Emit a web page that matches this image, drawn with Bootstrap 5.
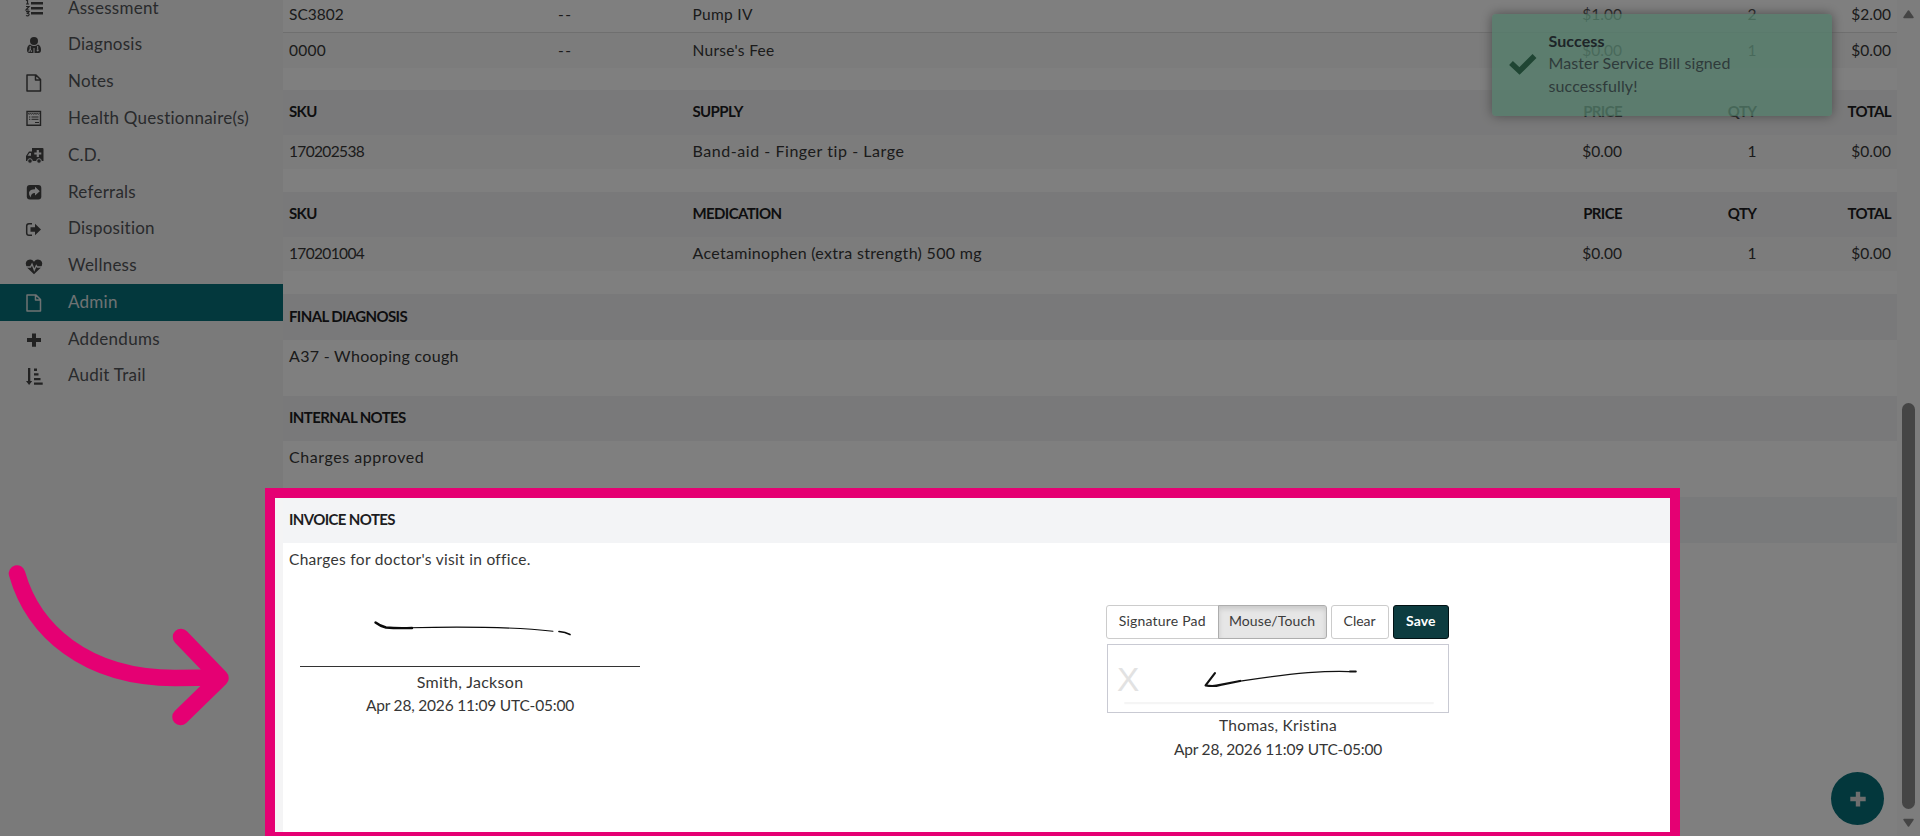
<!DOCTYPE html>
<html lang="en">
<head>
<meta charset="utf-8">
<title>Master Service Bill</title>
<link href="https://cdn.jsdelivr.net/npm/bootstrap@5.3.0/dist/css/bootstrap.min.css" rel="stylesheet">
<style>
body{font-family:Lato,"Liberation Sans",sans-serif;font-size:15.5px;line-height:23px;color:#363636;background:#fff;height:836px;overflow:hidden}
.side{width:283px;background:#f4f4f5;flex:none}
.side .nav{margin-top:-10.2px}
.side .nav-link{height:36.77px;padding:0 0 2px 24px;color:#525558;font-size:17px;letter-spacing:.25px;flex-wrap:nowrap}
.side .nav-link.active{background:#06707b;color:#dfe5e6}
.side .nav-link svg{width:20px;height:20px;margin-right:24px;position:relative;top:2px;color:#444}
.side .nav-link.active svg{color:#dfe5e6}
.bill{width:1614px;flex:none}
.line{margin:0;height:33.9px;padding-top:5px;background:#f8f8f8}
.line>*{padding:0 6px}
.line.first{height:32.5px;padding-top:3px;background:#fff;border-bottom:1px solid #dedede}
.line.second{height:35px;padding-top:6px}
.line.head{height:45.3px;padding-top:10.3px;background:#f3f3f4;color:#1d1d22;font-weight:700;letter-spacing:-.62px;font-size:15px}
.line.head.lit{background:#f3f4f6}
.gap-above{margin-top:23px}
.second + .gap-above{margin-top:22.4px}
.wide{letter-spacing:.3px;font-size:16px}
.wider{letter-spacing:.55px;font-size:16px}
.line>.wide,.line>.wider{margin-top:-1px}
.semi{letter-spacing:.3px}
.tight{letter-spacing:-.65px}
.stamp{letter-spacing:-.2px}
.dashes{letter-spacing:1.6px}
.note{height:56.2px;padding:5px 6px 0}
.note.wide,.note.wider{padding-top:4px}
.sign{width:342px;margin-left:17px}
.sign-line{width:340px;height:69px;border-bottom:1px solid #333}
.sign-line svg{margin-top:-.5px}
.ctl{padding-top:6px;gap:4px;margin:0 0 5px -1px;width:343px}
.btn{--bs-btn-font-size:14px;--bs-btn-padding-y:0;--bs-btn-padding-x:0;--bs-btn-border-radius:3px;height:34px;color:#3b3b3b;border-color:#ccc;white-space:nowrap;--bs-btn-line-height:28px;padding-bottom:2px;width:58.5px}
.btn.src{width:112.5px;letter-spacing:.2px}
.btn.on{width:109px;letter-spacing:.1px;background:#e6e6e6;border-color:#adadad;box-shadow:inset 0 3px 5px rgba(0,0,0,.125)}
.btn.save{width:56.500px;background:#0d3c40;border-color:#021114;color:#fff;font-weight:700;letter-spacing:.1px}
.pad{height:69px;width:342px;border:1px solid #c9cad3}
.rail{width:23px;background:#fafafa;flex:none;padding-left:5px}
.rail .thumb{width:13px;height:406px;border-radius:7px;background:#8a8a8a}
.notice{left:1491.5px;top:14px;width:340.5px;height:102px;border-radius:4px;background:rgba(169,250,214,.8);box-shadow:0 0 12px #999;color:#5f7777;font-size:16px;line-height:22.6px;padding:13px 16px 15.5px;letter-spacing:.1px}
.notice strong{color:#3c4a50}
.fab{left:1831px;top:772px;width:53px;height:53px;background:#066f79;color:#dcdcdc}
.spot{left:265px;top:487.6px;width:1414.7px;height:354.3px;border:10px solid #e50073;box-shadow:0 0 0 2000px rgba(0,0,0,.5)}
.arrow{left:0;top:560px}
</style>
</head>
<body class="d-flex position-relative">
<svg width="0" height="0" class="position-absolute">
<symbol id="file" viewBox="0 0 20 20"><path d="M3 2h9l4.500 4.500V18H3zM11.500 2v5h5" fill="none" stroke="currentColor" stroke-width="1.500" stroke-linejoin="round"/></symbol>
<symbol id="plus" viewBox="0 0 20 20"><path d="M8 3.500h4V8h5v4h-5v4.800H8V12H3V8h5z" fill="currentColor"/></symbol>
</svg>
<aside class="side">
<nav class="nav flex-column">
<a class="nav-link d-flex align-items-center"><svg viewBox="0 0 20 20" fill="currentColor"><path d="M7 3h12v2.400H7zM7 8h12v2.400H7zM7 13h12v2.400H7z"/><path d="M2 1.500 3.500.500V5M2 5h3M2 7.500h3L2 11h3.200M2 12.700h3L3.500 14.500Q5.500 14.500 5 16 4 17.500 2 16.500" fill="none" stroke="currentColor" stroke-width="1.200"/></svg>Assessment</a>
<a class="nav-link d-flex align-items-center"><svg viewBox="0 0 20 20" fill="currentColor"><circle cx="10" cy="5" r="4"/><path d="M6 8.500q4 3 8 0 3 1 3 5.500 0 3-2.500 3h-9Q3 17 3 14 3 9.500 6 8.500z"/><path d="M6.200 10v4M5 16q0-2.500 1.200-2.500T7.400 16M10 12v5M13.700 10v3" stroke="#f4f5f6" stroke-width="1" fill="none"/><circle cx="13.700" cy="14.300" r="1.100" fill="#f4f5f6"/></svg>Diagnosis</a>
<a class="nav-link d-flex align-items-center"><svg><use href="#file"/></svg>Notes</a>
<a class="nav-link d-flex align-items-center"><svg viewBox="0 0 20 20" fill="none" stroke="currentColor"><path d="M3 2.500h13.500v13.700H3z" stroke-width="1.400"/><path d="M4 4.500q1.200 1.300 2.300 0 1.200 1.300 2.300 0 1.200 1.300 2.300 0 1.200 1.300 2.300 0 1.200 1.300 2.300 0M5 8h1.300M7.500 8H14.500M5 10.300h1.300M7.500 10.300h7M11 13.500h4"/></svg>Health Questionnaire(s)</a>
<a class="nav-link d-flex align-items-center"><svg viewBox="0 0 20 20" fill="currentColor"><path d="M8 2h10.500q1 0 1 1v12H2v-5l3-4.500h3z"/><circle cx="6" cy="15" r="2.300" stroke="#f4f5f6"/><circle cx="15" cy="15" r="2.300" stroke="#f4f5f6"/><path d="M12.700 4h2.200v2.400h2.400v2.200h-2.400V11h-2.200V8.600h-2.400V6.400h2.400zM3.500 9.800 5.500 7H7v2.800z" fill="#f4f5f6"/></svg>C.D.</a>
<a class="nav-link d-flex align-items-center"><svg viewBox="0 0 20 20"><rect x="2.800" y="2" width="14.500" height="14.500" rx="3" fill="currentColor"/><path d="M11 3.800 15.800 8.300 11 12.500V10q-4.500 0-4 4.500Q4.500 12 5 9.500 6 6.300 11 6.300z" fill="#f4f5f6"/></svg>Referrals</a>
<a class="nav-link d-flex align-items-center"><svg viewBox="0 0 20 20" fill="currentColor"><path d="M8 3.700H5Q2.700 3.700 2.700 6v7Q2.700 15.300 5 15.300H8" fill="none" stroke="currentColor" stroke-width="1.500"/><path d="M6.500 7.300H11V3.800L17 9.500 11 15.200V11.700H6.500z"/></svg>Disposition</a>
<a class="nav-link d-flex align-items-center"><svg viewBox="0 0 20 20"><path d="M10 17.200 3.500 11Q0 6 3.500 3.200 7.500 1 10 4.700 12.500 1 16.500 3.200 20 6 16.500 11z" fill="currentColor"/><path d="M1.500 10H6.500L8 7l2.300 6 2-4.500 1 1.500H18.500" fill="none" stroke="#f4f5f6" stroke-width="1.300"/></svg>Wellness</a>
<a class="nav-link active d-flex align-items-center"><svg><use href="#file"/></svg>Admin</a>
<a class="nav-link d-flex align-items-center"><svg><use href="#plus"/></svg><span class="semi">Addendums</span></a>
<a class="nav-link d-flex align-items-center"><svg viewBox="0 0 20 20" fill="currentColor"><path d="M4 1h2.300v13H8.200L5.100 18 2 14h2zM10 1.500h3V4h-3zM10 6.300h4.500v2.200H10zM10 11h6.500v2.200H10zM10 15.500h8.700v2.300H10z"/></svg>Audit Trail</a>
</nav>
</aside>
<main class="bill">
<div class="row line first"><div class="col-2">SC3802</div><div class="col-1 dashes">--</div><div class="col-6 semi">Pump IV</div><div class="col-1 text-end">$1.00</div><div class="col-1 text-end">2</div><div class="col-1 text-end">$2.00</div></div>
<div class="row line second"><div class="col-2 semi">0000</div><div class="col-1 dashes">--</div><div class="col-6 semi">Nurse's Fee</div><div class="col-1 text-end">$0.00</div><div class="col-1 text-end">1</div><div class="col-1 text-end">$0.00</div></div>
<div class="row line head gap-above"><div class="col-3">SKU</div><div class="col-6">SUPPLY</div><div class="col-1 text-end">PRICE</div><div class="col-1 text-end">QTY</div><div class="col-1 text-end">TOTAL</div></div>
<div class="row line"><div class="col-3 tight">170202538</div><div class="col-6 wider">Band-aid - Finger tip - Large</div><div class="col-1 text-end">$0.00</div><div class="col-1 text-end">1</div><div class="col-1 text-end">$0.00</div></div>
<div class="row line head gap-above"><div class="col-3">SKU</div><div class="col-6">MEDICATION</div><div class="col-1 text-end">PRICE</div><div class="col-1 text-end">QTY</div><div class="col-1 text-end">TOTAL</div></div>
<div class="row line"><div class="col-3 tight">170201004</div><div class="col-6 wide">Acetaminophen (extra strength) 500 mg</div><div class="col-1 text-end">$0.00</div><div class="col-1 text-end">1</div><div class="col-1 text-end">$0.00</div></div>
<div class="row line head gap-above"><div class="col-12">FINAL DIAGNOSIS</div></div>
<div class="note wide">A37 - Whooping cough</div>
<div class="row line head"><div class="col-12">INTERNAL NOTES</div></div>
<div class="note wider">Charges approved</div>
<div class="row line head lit"><div class="col-12">INVOICE NOTES</div></div>
<div class="note semi">Charges for doctor's visit in office.</div>
<div class="row g-0">
<div class="col-6"><div class="sign">
<div class="sign-line"><svg class="d-block" width="340" height="60" viewBox="300 598 340 60" fill="none" stroke="#0a0a0a" stroke-linecap="round"><path d="M375.500 622.500Q380 626 386 627.500 396 628.500 412 628" stroke-width="2.400"/><path d="M410 627.700Q500 625.500 553 631.300" stroke-width="1.100"/><path d="M559 631.500l6 1 5 2" stroke-width="1.700"/></svg></div>
<div class="text-center" style="width:340px"><div class="wide" style="padding-top:3px;padding-bottom:1px">Smith, Jackson</div><div class="stamp">Apr 28, 2026 11:09 UTC-05:00</div></div>
</div></div>
<div class="col-6"><div class="sign text-center">
<div class="d-flex ctl"><div class="btn-group"><button class="btn src">Signature Pad</button><button class="btn on">Mouse/Touch</button></div><button class="btn">Clear</button><button class="btn save">Save</button></div>
<svg class="d-block pad" viewBox="1107.500 644.500 341 68" fill="none"><text x="1114.500" y="691.500" font-family="Liberation Sans" font-size="34" fill="#e2e2e2">X</text><path d="M1122 703.500h314" stroke="#f5f5f5" stroke-width="2.500"/><g stroke="#111" stroke-linecap="round"><path d="M1214 673l-9.500 12.500q8 1.500 15-.5l20-4" stroke-width="2.200" stroke-linejoin="round"/><path d="M1238 681.500Q1310 670 1350 671.500" stroke-width="1.300"/><path d="M1351 671.500h6" stroke-width="2"/></g></svg>
<div class="semi" style="padding-top:1.500px">Thomas, Kristina</div><div class="stamp pt-1" style="line-height:17px">Apr 28, 2026 11:09 UTC-05:00</div>
</div></div>
</div>
</main>
<div class="rail"><svg class="d-block" width="13" height="403"><path d="M2 17.500 6.500 11l4.500 6.500z" fill="#8a8a8a" stroke="#8a8a8a" stroke-width="1.500" stroke-linejoin="round"/></svg><div class="thumb"></div><svg class="d-block" width="13" height="27"><path d="M2 10.500h9L6.500 17z" fill="#8a8a8a" stroke="#8a8a8a" stroke-width="1.500" stroke-linejoin="round"/></svg></div>

<div class="notice position-absolute d-flex align-items-center"><svg width="29" height="24" viewBox="0 0 29 24" class="flex-shrink-0"><path d="M3 11l8.500 8L26.500 4" fill="none" stroke="#3f8a66" stroke-width="5.500"/></svg><div class="ms-2 ps-1"><strong>Success</strong><br>Master Service Bill signed<br>successfully!</div></div>
<div class="fab position-absolute rounded-circle d-flex align-items-center justify-content-center"><svg width="22" height="22"><use href="#plus"/></svg></div>
<div class="spot position-absolute"></div>
<svg class="arrow position-absolute" width="250" height="180" viewBox="0 560 250 180" fill="none" stroke="#e50073" stroke-width="16.500" stroke-linecap="round" stroke-linejoin="round"><path d="M17 573.500C33 630 85 678 175 678Q197 678 218 677M181 637l39.500 41L180.500 717"/></svg>
<script src="https://cdn.jsdelivr.net/npm/bootstrap@5.3.0/dist/js/bootstrap.bundle.min.js"></script>
</body>
</html>
